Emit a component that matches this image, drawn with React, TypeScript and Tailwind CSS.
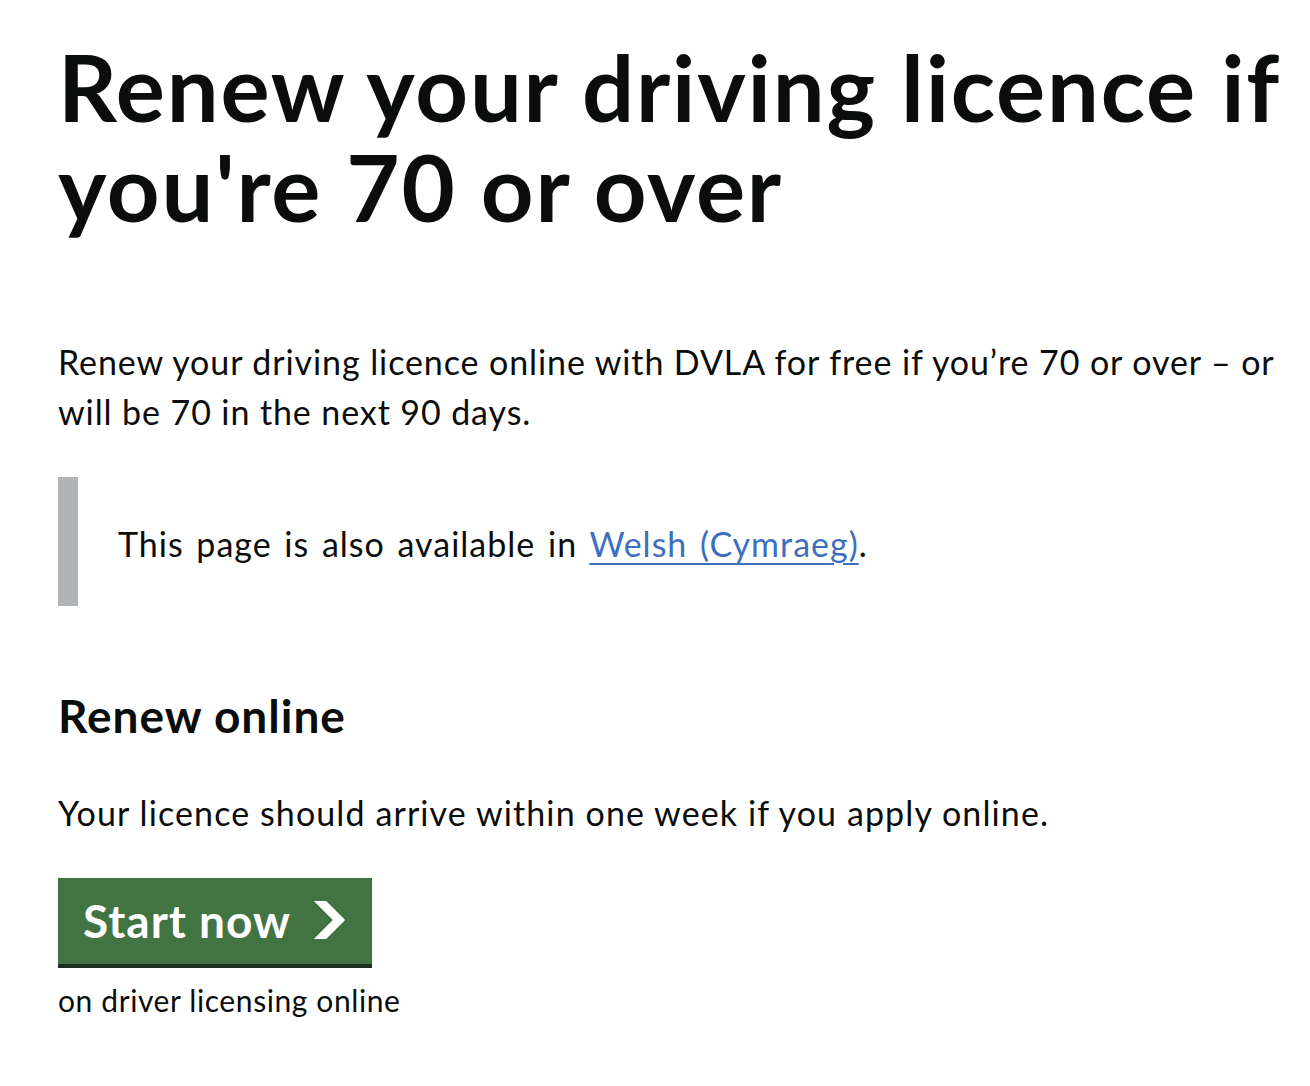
import React from 'react';

const Chevron: React.FC = () => (
  <svg className="ml-[22px] h-[38px] w-[33px]" viewBox="0 0 33 40" aria-hidden="true" focusable="false">
    <path fill="currentColor" d="M0 0h13l20 20-20 20H0l20-20z" />
  </svg>
);

const App: React.FC = () => {
  return (
    <main className="min-h-screen bg-white pl-[58px] pr-[20px] pt-[37px] text-[#0b0c0c] font-['Lato','Liberation_Sans',sans-serif]">
      <h1 className="whitespace-nowrap text-[92px] font-bold leading-[100px] tracking-[1.8px]">
        Renew your driving licence if
        <br />
        you're 70 or over
      </h1>

      <p className="mt-[100px] whitespace-nowrap text-[34px] leading-[50px] tracking-[0.9px]">
        Renew your driving licence online with DVLA for free if you’re 70 or over – or
        <br />
        will be 70 in the next 90 days.
      </p>

      <div className="mt-[40px] flex h-[129px] items-center border-l-[20px] border-[#b1b4b6] pl-[40px]">
        <p className="pt-[4px] text-[34px] leading-[50px] tracking-[1px] [word-spacing:3px]">
          This page is also available in{' '}
          <a
            href="#"
            className="text-[#3e6fbf] underline decoration-[2px] underline-offset-[6px]"
          >
            Welsh (Cymraeg)
          </a>
          .
        </p>
      </div>

      <h2 className="mt-[80px] text-[46px] font-bold leading-[60px] tracking-[1px]">Renew online</h2>

      <p className="mt-[42px] text-[34px] leading-[50px] tracking-[1.1px]">
        Your licence should arrive within one week if you apply online.
      </p>

      <a
        href="#"
        className="mt-[40px] inline-flex h-[86px] items-center bg-[#427443] pb-[2px] pl-[25px] pr-[26px] text-[46px] font-bold tracking-[1px] text-white shadow-[0_4px_0_#1c2e1e]"
      >
        Start now
        <Chevron />
      </a>

      <p className="mt-[16px] text-[30px] leading-[40px] tracking-[0.6px]">on driver licensing online</p>
    </main>
  );
};

export default App;
